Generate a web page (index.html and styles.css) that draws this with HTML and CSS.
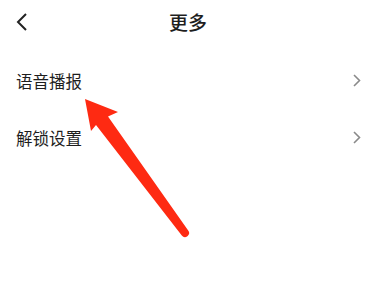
FILE: index.html
```html
<!DOCTYPE html>
<html lang="zh-CN">
<head>
    <meta charset="UTF-8">
    <meta name="viewport" content="width=device-width, initial-scale=1.0">
    <title>更多</title>
    <link rel="stylesheet" href="styles.css">
</head>
<body>
    <div class="header">
        <span class="back">
            <svg width="12" height="18" viewBox="0 0 12 18"><path d="M10 1 L2 9 L10 17" fill="none" stroke="#222" stroke-width="2"/></svg>
        </span>
        <h1>更多</h1>
    </div>

    <div class="list">
        <div class="row">
            <span>语音播报</span>
            <svg class="chev" width="8" height="13" viewBox="0 0 8 13"><path d="M1 1 L6.5 6.5 L1 12" fill="none" stroke="#8a8a8a" stroke-width="1.6"/></svg>
        </div>
        <div class="row">
            <span>解锁设置</span>
            <svg class="chev" width="8" height="13" viewBox="0 0 8 13"><path d="M1 1 L6.5 6.5 L1 12" fill="none" stroke="#8a8a8a" stroke-width="1.6"/></svg>
        </div>
    </div>

    <!-- freccia di annotazione -->
    <svg class="arrow" width="384" height="296" viewBox="0 0 384 296">
        <path d="M85 99 L118 112 L108 116.5 L188.2 230.6 A4 4 0 0 1 181.8 235.4 L96 125 L91 131 Z" fill="#fe2a12"/>
    </svg>
</body>
</html>
```

FILE: styles.css
```css
body {
    font-family: "Noto Sans CJK SC", "Noto Sans", sans-serif;
    background-color: #fff;
    color: #1e1e1e;
    margin: 0;
    padding: 0;
    width: 384px;
    height: 296px;
    position: relative;
    overflow: hidden;
}

/* Barra del titolo */
.header {
    height: 42px;
    display: flex;
    align-items: center;
    justify-content: center;
    position: relative;
}

.header h1 {
    margin: 0;
    font-size: 19px;
    font-weight: 500;
    margin-left: -8px;
}

.back {
    position: absolute;
    left: 16px;
    top: 12px;
}

/* Lista impostazioni */
.list {
    padding-top: 10px;
}

.row {
    height: 57px;
    display: flex;
    align-items: center;
    justify-content: space-between;
    padding: 0 23px 0 16px;
    font-size: 16.5px;
}

.arrow {
    position: absolute;
    left: 0;
    top: 0;
}
```
